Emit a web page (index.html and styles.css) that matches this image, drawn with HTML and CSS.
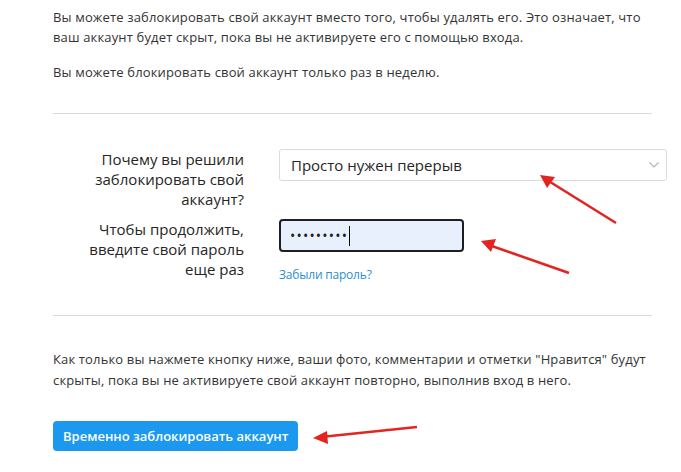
FILE: index.html
```html
<!DOCTYPE html>
<html lang="ru">
<head>
  <meta charset="UTF-8" />
  <title>Временно заблокировать аккаунт</title>
  <link rel="stylesheet" href="styles.css">
</head>
<body>
  <main class="page">
    <p class="note">Вы можете заблокировать свой аккаунт вместо того, чтобы удалять его. Это означает, что ваш аккаунт будет скрыт, пока вы не активируете его с помощью входа.</p>
    <p class="note note-last">Вы можете блокировать свой аккаунт только раз в неделю.</p>

    <hr class="divider">

    <form class="disable-form">
      <div class="form-row">
        <label class="form-label" for="reason">Почему вы решили заблокировать свой аккаунт?</label>
        <div class="form-field">
          <div class="select-box" id="reason">
            <span>Просто нужен перерыв</span>
            <svg class="chevron" width="12" height="8" viewBox="0 0 12 8">
              <path d="M1.5 1.5 L6 6 L10.5 1.5" fill="none" stroke="#b3b3b3" stroke-width="1.1"/>
            </svg>
          </div>
        </div>
      </div>

      <div class="form-row">
        <label class="form-label" for="password">Чтобы продолжить, введите свой пароль еще раз</label>
        <div class="form-field">
          <div class="password-box" id="password">
            <span class="dots">•••••••••</span><span class="caret"></span>
          </div>
          <a href="#" class="forgot-link">Забыли пароль?</a>
        </div>
      </div>
    </form>

    <hr class="divider">

    <p class="note warn">Как только вы нажмете кнопку ниже, ваши фото, комментарии и отметки "Нравится" будут скрыты, пока вы не активируете свой аккаунт повторно, выполнив вход в него.</p>

    <button class="disable-btn" type="button">Временно заблокировать аккаунт</button>
  </main>

  <!-- red arrows drawn over the screenshot -->
  <svg class="arrows" width="681" height="472" viewBox="0 0 681 472">
    <line x1="616" y1="223" x2="547" y2="180" stroke="#e32522" stroke-width="2.6"/>
    <path d="M540 175 L555 177 L547 188 Z" fill="#e32522"/>
    <line x1="569" y1="273" x2="489" y2="245" stroke="#e32522" stroke-width="2.6"/>
    <path d="M481 241 L496 239 L491 252 Z" fill="#e32522"/>
    <line x1="417" y1="427" x2="321" y2="437" stroke="#e32522" stroke-width="2.6"/>
    <path d="M313 438 L327 431 L328 444 Z" fill="#e32522"/>
  </svg>
</body>
</html>
```

FILE: styles.css
```css
* {
  margin: 0;
  padding: 0;
  box-sizing: border-box;
}

body {
  font-family: "Open Sans", sans-serif;
  background-color: #ffffff;
  color: #262626;
  width: 681px;
  height: 472px;
  overflow: hidden;
  position: relative;
}

.page {
  padding: 7px 29px 0 53px;
}

.note {
  font-size: 13px;
  letter-spacing: 0.15px;
  line-height: 20px;
  color: #333333;
  margin-bottom: 15px;
}

.note-last {
  margin-bottom: 31px;
}

.divider {
  border: none;
  border-top: 1px solid #dbdbdb;
  margin: 0;
}

.disable-form {
  padding: 35px 0 32px;
}

.form-row {
  display: grid;
  grid-template-columns: 191px 388px;
  column-gap: 35px;
  margin-bottom: 10px;
}

.form-row:last-child {
  margin-bottom: 0;
}

.form-label {
  padding-left: 21px;
  text-align: right;
  font-size: 15px;
  line-height: 20px;
  color: #262626;
}

.form-field {
  display: flex;
  flex-direction: column;
  align-items: flex-start;
}

.select-box {
  width: 388px;
  height: 32px;
  border: 1px solid #dbdbdb;
  border-radius: 3px;
  padding: 0 6px 0 11px;
  display: flex;
  align-items: center;
  justify-content: space-between;
  font-size: 15px;
  color: #262626;
}

.password-box {
  width: 185px;
  height: 33px;
  border: 2px solid #1f1f1f;
  border-radius: 4px;
  background-color: #e8f0fe;
  padding: 0 9px;
  display: flex;
  align-items: center;
}

.dots {
  font-size: 14px;
  letter-spacing: 1.2px;
  color: #1f1f1f;
}

.caret {
  display: inline-block;
  width: 1px;
  height: 20px;
  background-color: #000000;
  margin-left: 1px;
}

.forgot-link {
  margin-top: 15px;
  font-size: 12px;
  letter-spacing: -0.2px;
  line-height: 16px;
  color: #2c8fcf;
  text-decoration: none;
}

.warn {
  margin-top: 33px;
  margin-bottom: 30px;
  line-height: 21px;
}

.disable-btn {
  background-color: #1c98ee;
  color: #ffffff;
  border: none;
  border-radius: 4px;
  height: 30px;
  padding: 0 10px;
  font-family: "Open Sans", sans-serif;
  font-size: 13px;
  font-weight: 600;
  cursor: pointer;
}

.arrows {
  position: absolute;
  left: 0;
  top: 0;
  pointer-events: none;
}
```
